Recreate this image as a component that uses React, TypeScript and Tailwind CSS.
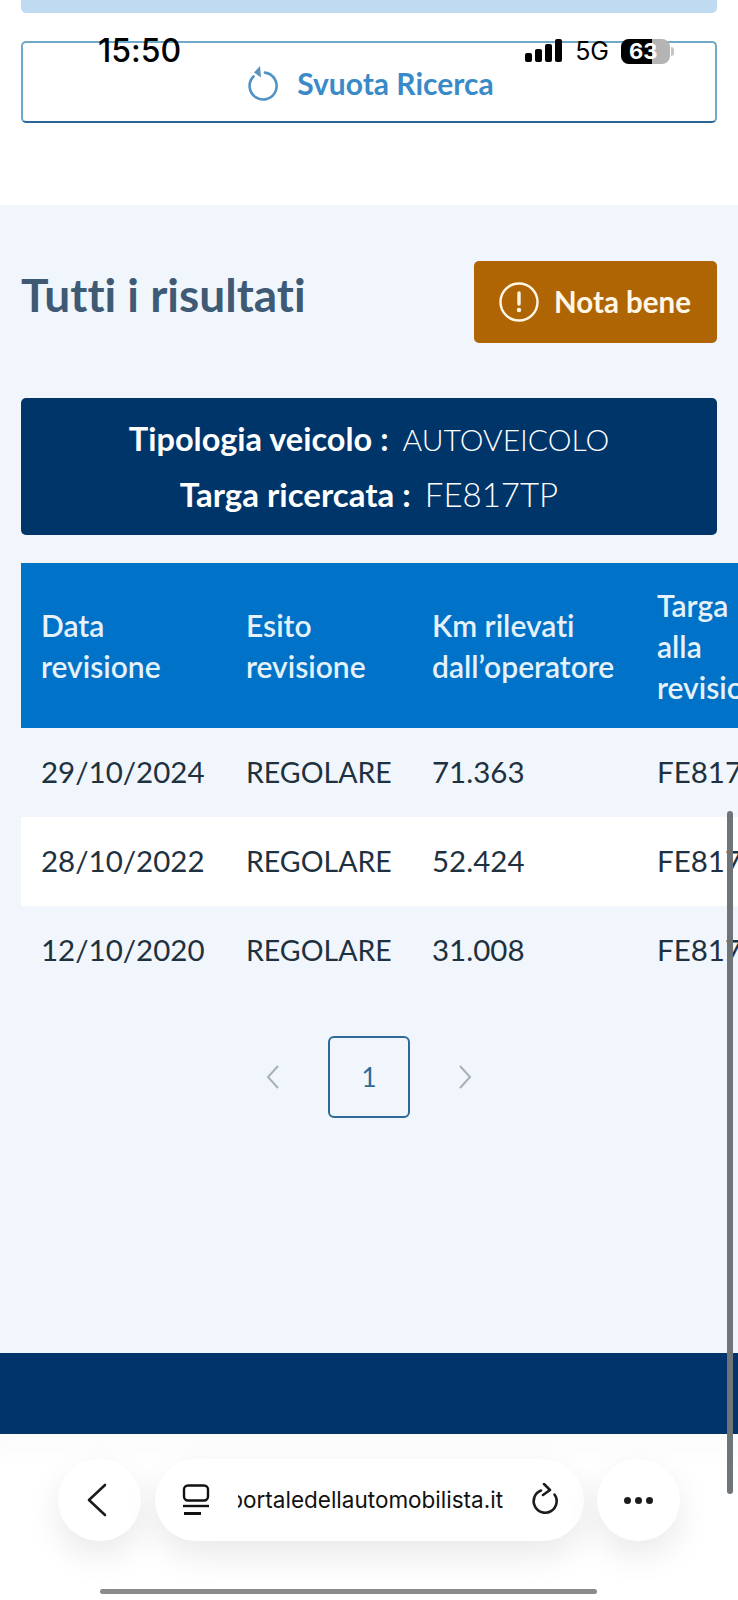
const font = "font-['Lato','Noto_Sans',sans-serif] [font-variant-ligatures:none]"

const rows = [
  { data: "29/10/2024", km: "71.363", bg: "bg-[#f0f6fb]" },
  { data: "28/10/2022", km: "52.424", bg: "bg-white" },
  { data: "12/10/2020", km: "31.008", bg: "bg-[#f0f6fb]" },
]

function StatusBar() {
  return (
    <div className="absolute left-0 right-0 top-[31px] flex h-[40px] items-center justify-between pl-[98px] pr-[64px] font-['Inter',sans-serif] text-black">
      <span className="text-[32px] font-medium leading-none">15:50</span>
      <div className="flex items-center">
        <svg width="38" height="24" viewBox="0 0 38 24" fill="#000">
          <rect x="1" y="14" width="7" height="9" rx="2" />
          <rect x="11" y="10" width="7" height="13" rx="2" />
          <rect x="21" y="5" width="7" height="18" rx="2" />
          <rect x="31" y="0" width="7" height="23" rx="2" />
        </svg>
        <span className="ml-[13px] text-[25px] leading-none">5G</span>
        <div className="relative ml-[12px] flex h-[25px] w-[49px] overflow-hidden rounded-[8px] bg-[#b4b4b4]">
          <div className="h-full w-[31px] bg-black" />
          <span className="absolute left-[8px] top-[2px] text-[22px] font-bold leading-[21px] text-white">63</span>
        </div>
        <div className="ml-[1px] h-[9px] w-[3px] rounded-r-full bg-[#c4c4c4]" />
      </div>
    </div>
  )
}

function ResetIcon() {
  return (
    <svg width="30" height="35" viewBox="0 0 30 35" fill="none">
      <path d="M17 6.6a13.5 13.5 0 1 1 -11.5 3.9" stroke="#4f93c6" strokeWidth="2.6" strokeLinecap="round" />
      <path d="M12 0 L6 6.5 L13 11.5 Z" fill="#5b93bd" />
    </svg>
  )
}

function BrowserBar() {
  return (
    <div className="relative flex h-[166px] items-start bg-white pl-[58px] pt-[25px] shadow-[inset_0_34px_40px_-30px_rgba(0,0,0,0.03)]">
      <div className="flex h-[82px] w-[83px] items-center justify-center rounded-full bg-white pr-[6px] shadow-[0_14px_34px_rgba(0,0,0,0.09)]">
        <svg width="20" height="34" viewBox="0 0 20 34" fill="none">
          <path d="M18 2 L2 17 L18 32" stroke="#1c1c1e" strokeWidth="2.6" strokeLinecap="round" strokeLinejoin="round" />
        </svg>
      </div>
      <div className="ml-[14px] flex h-[82px] w-[429px] items-center rounded-full bg-white pl-[27px] shadow-[0_14px_34px_rgba(0,0,0,0.09)]">
        <svg width="28" height="32" viewBox="0 0 28 32" fill="none" className="shrink-0">
          <rect x="2" y="1.5" width="24" height="15" rx="4" stroke="#111" strokeWidth="2.4" />
          <path d="M1 22h26" stroke="#111" strokeWidth="2.4" />
          <path d="M2 29.5h17" stroke="#111" strokeWidth="3" />
        </svg>
        <div className="ml-[28px] flex w-[265px] justify-end overflow-hidden whitespace-nowrap font-['Inter',sans-serif] text-[22.5px] leading-none text-[#111]">
          <span className="shrink-0">portaledellautomobilista.it</span>
        </div>
        <svg width="30" height="34" viewBox="0 0 30 34" fill="none" className="ml-[27px] shrink-0">
          <path d="M11 7.5a11.5 11.5 0 1 0 13.5 4" stroke="#1c1c1e" strokeWidth="2.6" strokeLinecap="round" />
          <path d="M14 1 L20 7 L13 12" stroke="#1c1c1e" strokeWidth="2.6" strokeLinecap="round" strokeLinejoin="round" />
        </svg>
      </div>
      <div className="ml-[13px] flex h-[82px] w-[83px] items-center justify-center gap-[4px] rounded-full bg-white shadow-[0_14px_34px_rgba(0,0,0,0.09)]">
        <span className="h-[7px] w-[7px] rounded-full bg-[#1c1c1e]" />
        <span className="h-[7px] w-[7px] rounded-full bg-[#1c1c1e]" />
        <span className="h-[7px] w-[7px] rounded-full bg-[#1c1c1e]" />
      </div>
      <div className="absolute bottom-[6px] left-[100px] h-[5px] w-[497px] rounded-full bg-[#8a8a8a]" />
    </div>
  )
}

export default function App() {
  return (
    <div className={`relative h-[1600px] w-[738px] overflow-hidden bg-white ${font}`}>
      <div className="h-[205px] px-[21px]">
        <div className="h-[13px] rounded-b-[5px] bg-[#c0daf1]" />
        <button className="mt-[28px] flex h-[82px] w-full items-center justify-center gap-[19px] rounded-[5px] border-[2px] border-[#6fa8c9] border-b-[#2b6596] pl-[4px] pt-[2px]">
          <ResetIcon />
          <span className="text-[30px] font-bold text-[#3a8ac8]">Svuota Ricerca</span>
        </button>
      </div>

      <div className="h-[1148px] bg-[#f0f6fb]">
        <div className="flex items-start justify-between px-[21px] pt-[56px]">
          <h1 className="text-[46px] font-bold leading-[68px] text-[#3f5a75]">Tutti i risultati</h1>
          <button className="flex h-[82px] w-[243px] items-center rounded-[5px] bg-[#b06505] pl-[25px] text-[#fff7e6]">
            <svg width="40" height="40" viewBox="0 0 40 40" fill="none">
              <circle cx="20" cy="20" r="18.5" stroke="currentColor" strokeWidth="2.4" />
              <path d="M20 11v11" stroke="currentColor" strokeWidth="3.4" strokeLinecap="round" />
              <circle cx="20" cy="28" r="2.2" fill="currentColor" />
            </svg>
            <span className="ml-[15px] text-[29.5px] font-bold">Nota bene</span>
          </button>
        </div>

        <div className="mx-[21px] mt-[55px] flex h-[137px] flex-col items-center justify-center gap-[14px] rounded-[5px] bg-[#00356a] leading-[41px] text-white">
          <p className="text-[32.5px]">
            <span className="font-bold">Tipologia veicolo :</span>
            <span className="ml-[14px] text-[30px] font-light">AUTOVEICOLO</span>
          </p>
          <p className="text-[33px]">
            <span className="font-bold">Targa ricercata :</span>
            <span className="ml-[14px] font-light">FE817TP</span>
          </p>
        </div>

        <div className="ml-[21px] mt-[28px] overflow-hidden">
          <table className="w-[900px] table-fixed border-collapse text-left">
            <colgroup>
              <col className="w-[205px]" />
              <col className="w-[186px]" />
              <col className="w-[225px]" />
              <col className="w-[284px]" />
            </colgroup>
            <thead>
              <tr className="h-[165px] bg-[#0073c8] text-[30px] leading-[41px] text-[#e6f1fa]">
                <th className="pl-[20px] pt-[1px] font-semibold">Data<br />revisione</th>
                <th className="pl-[20px] pt-[1px] font-semibold">Esito<br />revisione</th>
                <th className="pl-[20px] pt-[1px] font-semibold">Km rilevati<br />dall’operatore</th>
                <th className="pl-[20px] pt-[1px] font-semibold">Targa<br />alla<br />revisione</th>
              </tr>
            </thead>
            <tbody className="text-[29.5px] text-[#1e3140]">
              {rows.map((r) => (
                <tr key={r.data} className={`h-[89px] ${r.bg}`}>
                  <td className="pl-[20px]">{r.data}</td>
                  <td className="pl-[20px] text-[28.5px]">REGOLARE</td>
                  <td className="pl-[20px]">{r.km}</td>
                  <td className="pl-[20px]">FE817TP</td>
                </tr>
              ))}
            </tbody>
          </table>
        </div>

        <div className="mt-[41px] flex items-center justify-center">
          <svg width="16" height="26" viewBox="0 0 16 26" fill="none">
            <path d="M13 2 L3 13 L13 24" stroke="#a9b0b6" strokeWidth="2" />
          </svg>
          <div className="mx-[47px] flex h-[82px] w-[82px] items-center justify-center rounded-[6px] border-[2px] border-[#2f6a97] text-[26px] text-[#2f6a97]">1</div>
          <svg width="16" height="26" viewBox="0 0 16 26" fill="none">
            <path d="M3 2 L13 13 L3 24" stroke="#a9b0b6" strokeWidth="2" />
          </svg>
        </div>
      </div>

      <div className="h-[81px] bg-[#00346a]" />
      <BrowserBar />

      <StatusBar />
      <div className="absolute left-[727px] top-[811px] h-[683px] w-[6px] rounded-full bg-[#6f7479]" />
    </div>
  )
}
